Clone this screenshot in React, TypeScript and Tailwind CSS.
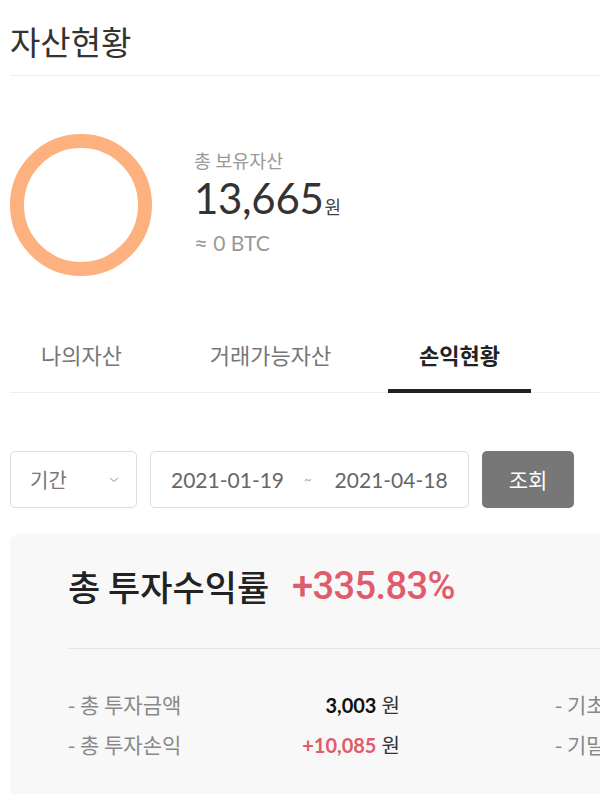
import React from "react";

const font = { fontFamily: "Lato, 'Noto Sans CJK KR', sans-serif" };
const kr = { fontFamily: "'Noto Sans CJK KR', sans-serif" };

export default function App() {
  return (
    <div className="w-[600px] h-[794px] overflow-hidden bg-white" style={font}>
      <div className="pl-[10px] w-[720px]">
        {/* Header */}
        <div className="w-[590px] h-[76px] border-b border-[#eeeeee] flex items-center">
          <h1 className="text-[33px] text-[#333] font-normal leading-none -mt-[66px] translate-y-[37px]" style={kr}>자산현황</h1>
        </div>

        {/* Summary */}
        <div className="w-[590px] h-[244px] pt-[58px]">
          <div className="flex items-center h-[142px]">
            <svg width="142" height="142" viewBox="0 0 142 142" className="shrink-0">
              <circle cx="71" cy="71" r="64" fill="none" stroke="#fdb17e" strokeWidth="14" />
            </svg>
            <div className="ml-[42px] flex flex-col -mt-[5px]">
              <span className="text-[18.5px] text-[#9a9a9a] leading-none" style={kr}>총 보유자산</span>
              <div className="flex items-baseline mt-[8px]">
                <span className="text-[42px] text-[#333] leading-none tracking-[-0.3px]">13,665</span>
                <span className="text-[18px] text-[#444] leading-none ml-[1px]" style={kr}>원</span>
              </div>
              <span className="text-[21px] text-[#999] leading-none mt-[11px]"><span className="text-[24px]">≈</span> 0 BTC</span>
            </div>
          </div>
        </div>

        {/* Tabs */}
        <div className="w-[590px] border-b border-[#eeeeee] flex gap-[46px] h-[73px]" style={kr}>
          <div className="w-[143px] flex items-center justify-center text-[22px] text-[#777] pb-[4px]">나의자산</div>
          <div className="w-[143px] flex items-center justify-center text-[22px] text-[#777] pb-[4px]">거래가능자산</div>
          <div className="w-[143px] flex items-center justify-center text-[22px] text-[#222] font-bold border-b-[4px] border-[#222] mb-[-1px]">손익현황</div>
        </div>

        {/* Filter */}
        <div className="flex gap-[13px] mt-[58px] h-[57px]">
          <div className="w-[127px] border border-[#dddddd] rounded-[5px] flex items-center justify-between pl-[19px] pr-[16px]">
            <span className="text-[20px] text-[#777]" style={kr}>기간</span>
            <svg width="12" height="8" viewBox="0 0 12 8"><path d="M2 2 L6 5.5 L10 2" fill="none" stroke="#bbb" strokeWidth="1.3" /></svg>
          </div>
          <div className="w-[319px] border border-[#dddddd] rounded-[5px] flex items-center pl-[20px] text-[21px] text-[#666]">
            <span>2021-01-19</span>
            <span className="ml-[20px] mr-[23px] text-[13px] text-[#aaa]">~</span>
            <span>2021-04-18</span>
          </div>
          <button className="w-[92px] bg-[#777777] rounded-[5px] text-white text-[21px]" style={kr}>조회</button>
        </div>

        {/* Result box */}
        <div className="mt-[25px] bg-[#f8f8f8] rounded-tl-[10px] pl-[58px] pt-[34px] h-[300px]">
          <div className="flex items-center h-[38px]">
            <span className="text-[35px] text-[#222] font-medium" style={kr}>총 투자수익률</span>
            <span className="text-[38px] text-[#e05b6b] ml-[23px] tracking-[-0.6px]" style={{ fontFamily: "Roboto, sans-serif", fontWeight: 500 }}>+335.83%</span>
          </div>
          <div className="border-b border-[#e6e6e6] mt-[43px]" />
          <div className="mt-[45px] flex flex-col gap-[18px] text-[20px]">
            <div className="flex items-center h-[22px]">
              <span className="w-[230px] text-[21px] text-[#888]" style={kr}>- 총 투자금액</span>
              <span className="w-[102px] text-right whitespace-nowrap"><b className="text-[#111] font-bold">3,003</b> <span className="text-[#333]" style={kr}>원</span></span>
              <span className="ml-[155px] text-[21px] text-[#888] whitespace-nowrap" style={kr}>- 기초자산</span>
            </div>
            <div className="flex items-center h-[22px]">
              <span className="w-[230px] text-[21px] text-[#888]" style={kr}>- 총 투자손익</span>
              <span className="w-[102px] text-right whitespace-nowrap"><b className="text-[#e05b6b] font-bold">+10,085</b> <span className="text-[#333]" style={kr}>원</span></span>
              <span className="ml-[155px] text-[21px] text-[#888] whitespace-nowrap" style={kr}>- 기말자산</span>
            </div>
          </div>
        </div>
      </div>
    </div>
  );
}
